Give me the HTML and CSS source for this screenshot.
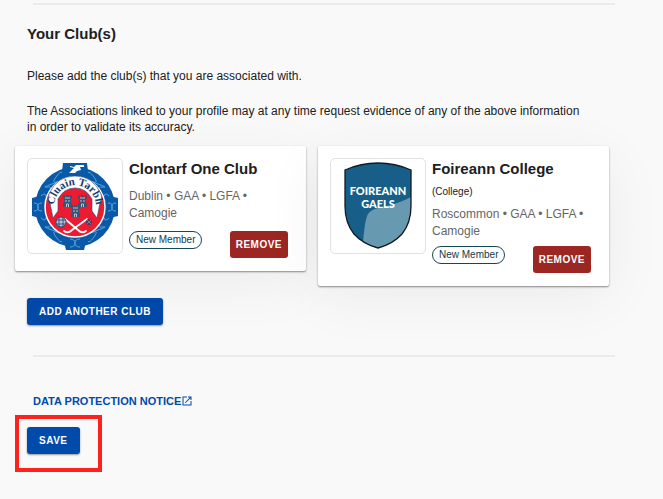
FILE: index.html
```html
<!DOCTYPE html>
<html lang="en">
<head>
<meta charset="utf-8">
<meta name="viewport" content="width=device-width, initial-scale=1">
<title>Your Club(s)</title>
<link rel="stylesheet" href="styles.css">
</head>
<body>
<main class="page">
  <hr class="divider">
  <section class="clubs">
    <div class="intro">
      <h2 class="section-title">Your Club(s)</h2>
      <p>Please add the club(s) that you are associated with.</p>
      <p>The Associations linked to your profile may at any time request evidence of any of the above information in order to validate its accuracy.</p>
    </div>
    <div class="card-grid">
      <article class="card">
        <div class="crest">
          <svg viewBox="0 0 90 90" role="img" aria-label="Clontarf crest">
            <defs>
              <path id="arc" d="M25.500 53 A21 21 0 1 1 64.500 53"/>
              <g id="tower"><path d="M0 0h2v2h1V0h3v2h1V0h2v3L8 4v4h1v4H0V8h1V4L0 3z" fill="#3b5277"/><path d="M3.500 12V9h2v3M2 3h5M3 5v2M6 5v2" stroke="#d5dfec" stroke-width=".8" fill="none"/></g>
            </defs>
            <g fill="#0a59a8">
              <path d="M33 2h24l1 8H32zM36 89h18l2-8H34zM2 37v18l8 2V35zM88 37v18l-8 2V35z"/>
              <circle cx="45" cy="46" r="40"/>
            </g>
            <g fill="none" stroke="#58a3da" stroke-width="1">
              <path d="M4 42q5 0 4 4t4 4M4 50q5 0 4-4t4-4M78 42q5 0 4 4t4 4M78 50q5 0 4-4t4-4M40 78q5 0 5 4t5 4M40 86q5 0 5-4t5-4"/>
              <path d="M11 35q4-4 5 0t4-3-3-6 5-3 5-2-1-5 6-4M79 35q-4-4-5 0t-4-3 3-6-5-3-5-2 1-5-6-4M11 57q4 4 5 0t4 3-3 6 5 3 5 2-1 5 6 4M79 57q-4 4-5 0t-4 3 3 6-5 3-5 2 1 5-6 4"/>
            </g>
            <circle cx="45" cy="46" r="30" fill="#ed1b2f" stroke="#fff" stroke-width="1.500"/>
            <path d="M23 57L20 42Q17 38 19 33Q27 15 45 15T71 33Q73 38 70 42L67 57L62 50L62 38Q56 27 45 27T28 38L28 50z" fill="#fff" stroke="#294878" stroke-width=".6"/>
            <text class="crest-name" text-anchor="middle"><textPath href="#arc" startOffset="50%">Cluain Tarbh</textPath></text>
            <use href="#tower" x="33" y="34"/><use href="#tower" x="48" y="34"/><use href="#tower" x="41" y="44"/>
            <path d="M40 5l4 1 2-2h8v2h-4l1 3-4 1-2 2h-6l3-3 2-2-4-1z" fill="#fff"/>
            <path d="M34 70q4 3 8-1l15-11M56 70q-4 3-8-1L35 58" fill="none" stroke="#fff" stroke-width="1.800" stroke-linecap="round"/>
            <circle cx="31" cy="61" r="5" fill="#bac6d8" stroke="#294878"/>
            <path d="M26 59h10M27 63h8M29 56v10M33 56v10" stroke="#294878" stroke-width=".9" fill="none"/>
            <circle cx="59" cy="61" r="3" fill="#294878"/><path d="M57 59l4 4m0-4l-4 4" stroke="#dc7480" stroke-width=".7"/>
          </svg>
        </div>
        <div class="details">
          <h3 class="club-name">Clontarf One Club</h3>
          <p class="codes">Dublin • GAA • LGFA • Camogie</p>
          <div class="card-foot">
            <span class="badge">New Member</span>
            <button type="button" class="button remove">REMOVE</button>
          </div>
        </div>
      </article>
      <article class="card">
        <div class="crest">
          <svg viewBox="0 0 90 90" role="img" aria-label="Foireann Gaels crest">
            <path d="M45 2Q62 2 78 9V45Q78 62 69 73Q60 83 45 87Q30 83 21 73Q12 62 12 45V9Q28 2 45 2z" fill="#175f88"/>
            <path d="M30 81Q32 58 35 53Q38 48 49 46Q65 43 78 36V45Q78 62 69 73Q60 83 45 87Q37 85 30 81z" fill="#6799b1"/>
            <path d="M45 2Q62 2 78 9V45Q78 62 69 73Q60 83 45 87Q30 83 21 73Q12 62 12 45V9Q28 2 45 2z" fill="none" stroke="#111b22" stroke-width="1.300"/>
            <text class="shield-name" text-anchor="middle" x="45" y="34">FOIREANN</text>
            <text class="shield-name" text-anchor="middle" x="45" y="47">GAELS</text>
          </svg>
        </div>
        <div class="details">
          <h3 class="club-name">Foireann College</h3>
          <p class="kind">(College)</p>
          <p class="codes">Roscommon • GAA • LGFA • Camogie</p>
          <div class="card-foot">
            <span class="badge">New Member</span>
            <button type="button" class="button remove">REMOVE</button>
          </div>
        </div>
      </article>
    </div>
    <button type="button" class="button primary add">ADD ANOTHER CLUB</button>
  </section>
  <hr class="divider">
  <footer class="actions">
    <a class="notice" href="#notice">DATA PROTECTION NOTICE<svg viewBox="0 0 24 24" aria-hidden="true"><path d="M19 19H5V5h7V3H3v18h18v-9h-2zM14 3v2h3.600l-9.800 9.800 1.400 1.400L19 6.400V10h2V3z"/></svg></a>
    <div class="save-frame"><button type="submit" class="button primary">SAVE</button></div>
  </footer>
</main>
</body>
</html>
```
FILE: styles.css
```css
* { box-sizing: border-box; }
body {
  margin: 0;
  background: #f9f9f9;
  color: #202020;
  font: 12px/16px "Liberation Sans", Arial, sans-serif;
}
h2, h3, p { margin: 0; }
.page { padding: 3px 48px 24px 15px; }
.divider { height: 2px; margin: 0 0 0 18px; border: 0; background: #ebebeb; }
.intro { padding: 19px 24px 11px 12px; }
.intro p { margin-top: 19px; }
.section-title { font-size: 15px; line-height: 20px; }
.section-title + p { margin-top: 24px; }
.card-grid {
  display: grid;
  grid-template-columns: 1fr 1fr;
  align-items: start;
  gap: 12px;
  margin-right: 6px;
}
.card {
  display: flex;
  gap: 6px;
  padding: 12px 18px 13px 12px;
  background: #fff;
  border-radius: 2px;
  box-shadow: 0 1px 2px rgba(0, 0, 0, .45), 0 12px 60px rgba(0, 0, 0, .06);
}
.crest {
  flex: none;
  width: 96px;
  height: 96px;
  padding: 2px;
  border: 1px solid #e2e2e2;
  border-radius: 5px;
  background: #fff;
}
.crest svg { display: block; width: 100%; height: 100%; }
.crest-name { font: bold 11px "Liberation Serif", serif; fill: #193d70; }
.shield-name { font: 900 11px Lato, sans-serif; fill: #fff; }
.details { flex: 1; min-width: 0; }
.club-name { font-size: 15px; line-height: 22px; }
.kind { font-size: 10px; line-height: 24px; }
.codes { line-height: 17px; color: #666; }
.club-name + .codes { margin-top: 8px; }
.kind + .codes { margin-top: 2px; }
.card-foot {
  display: flex;
  justify-content: space-between;
  align-items: flex-start;
  margin-top: 9px;
}
.kind ~ .card-foot { margin-top: 6px; }
.badge {
  padding: 0 6px;
  border: 1px solid #174658;
  border-radius: 9px;
  background: #fff;
  color: #103b4e;
  font-size: 10px;
  line-height: 16px;
}
.button {
  height: 27px;
  padding: 0 12px;
  border: 0;
  border-radius: 3px;
  color: #fff;
  font: bold 10px/16px "Liberation Sans", Arial, sans-serif;
  letter-spacing: 0.5px;
}
.primary { background: #004aaa; box-shadow: 0 1px 2px rgba(0, 0, 0, .4); }
.remove { padding: 0 6px; background: #9b2622; }
.add { display: block; margin: 12px 0 30px 12px; }
.actions { display: flex; flex-direction: column; align-items: flex-start; padding-top: 36px; }
.notice {
  display: flex;
  align-items: center;
  margin-left: 18px;
  color: #004aaa;
  font-size: 11px;
  font-weight: bold;
  line-height: 16px;
  text-decoration: none;
}
.notice svg { width: 12px; height: 12px; fill: currentColor; }
.save-frame { margin-top: 6px; padding: 8px 18px 14px 8px; border: 4px solid #ff211c; }
```
